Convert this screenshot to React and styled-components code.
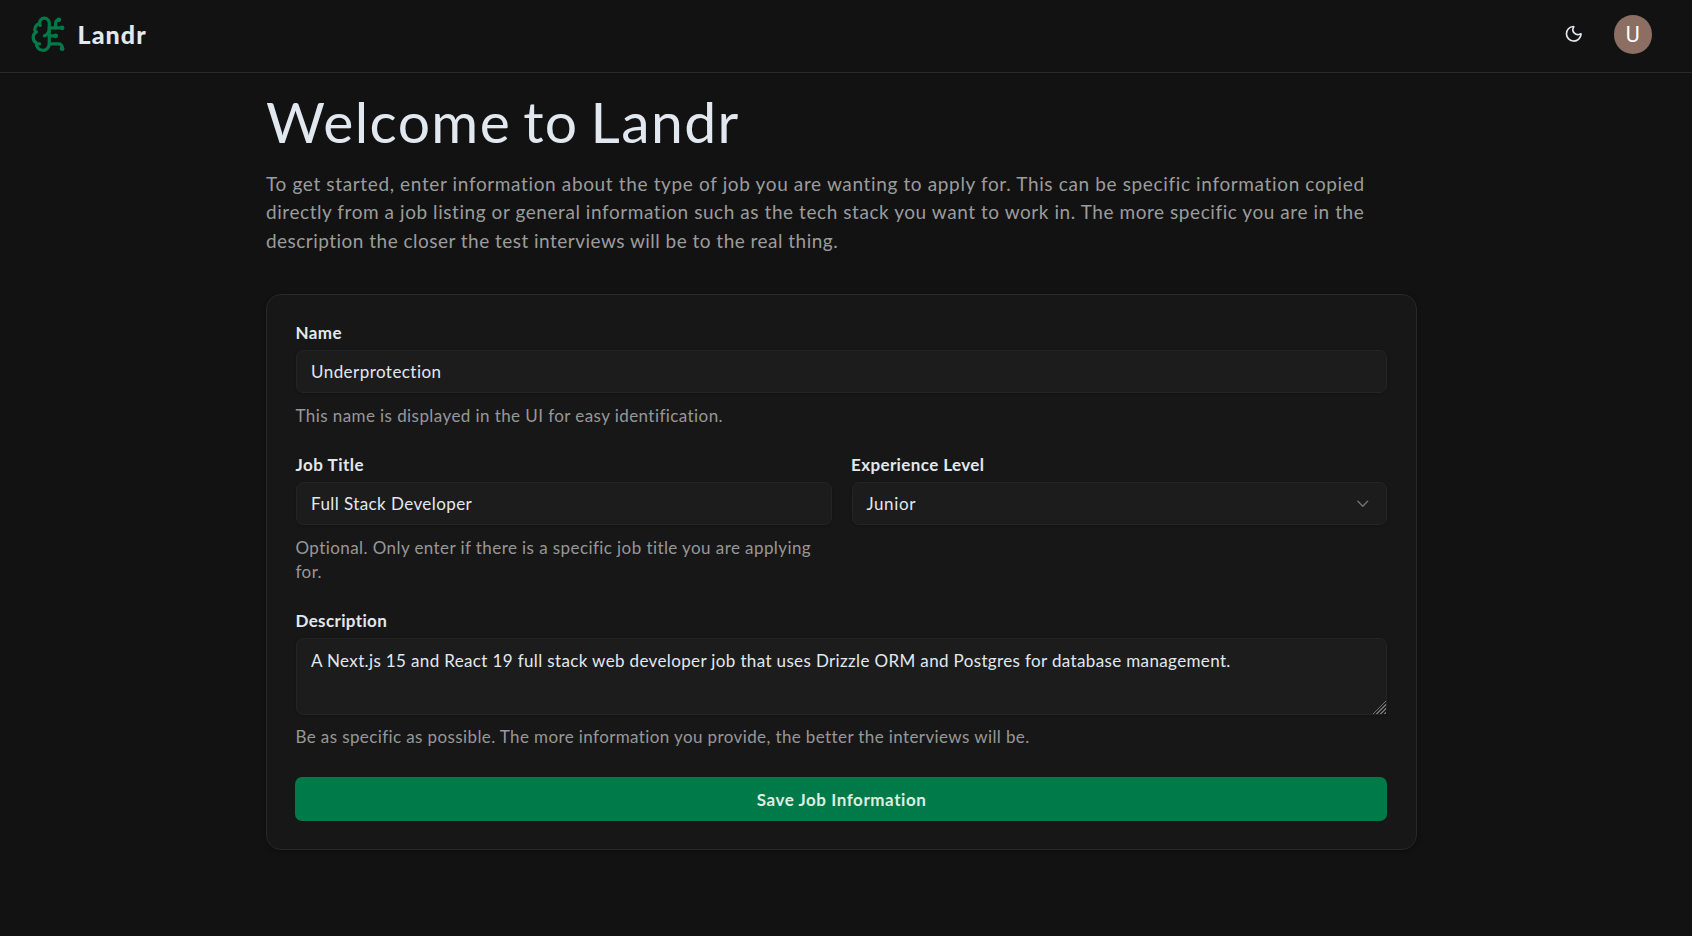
import React from "react";
import styled, { createGlobalStyle } from "styled-components";
import { BrainCircuit, ChevronDown, Moon } from "lucide-react";

const GlobalStyle = createGlobalStyle`
  *, *::before, *::after { box-sizing: border-box; }
  html { color-scheme: dark; background: #121212; }
  body {
    margin: 0;
    min-height: 100vh;
    overflow: hidden;
    background: #121212;
    color: #e2e8f0;
    font-family: Lato, "Open Sans", sans-serif;
    font-size: 17px;
    font-variant-ligatures: none;
  }
`;

const Header = styled.header`
  height: 73px;
  padding: 0 40px 3px 30px;
  display: flex;
  align-items: center;
  justify-content: space-between;
  border-bottom: 1px solid #2a2a2a;
`;

const Brand = styled.div`
  display: flex;
  align-items: center;
  gap: 9px;
  color: #007a48;
`;

const BrandName = styled.span`
  padding-bottom: 2px;
  color: #e2e8f0;
  font-size: 25px;
  font-weight: 900;
  line-height: 30px;
  letter-spacing: 1.1px;
`;

const Actions = styled.div`
  display: flex;
  align-items: center;
  gap: 30px;
`;

const MoonIcon = styled(Moon)`
  margin-bottom: 1.5px;
`;

const Avatar = styled.div`
  width: 38.5px;
  height: 38.5px;
  border-radius: 50%;
  display: grid;
  place-items: center;
  background: #8d6e63;
  color: #fff;
  font: 400 21.5px/38px Roboto, Inter, sans-serif;
`;

const Main = styled.main`
  width: 1151px;
  margin: 0 0 0 266px;
  padding-top: 20px;
`;

const Title = styled.h1`
  margin: 0 0 20.5px;
  font-size: 57px;
  font-weight: 400;
  line-height: 56px;
  letter-spacing: 1.4px;
  word-spacing: -4px;
`;

const Intro = styled.p`
  margin: 0 0 39px;
  color: #9c9c9c;
  font-size: 19px;
  line-height: 28.5px;
`;

const IntroLine = styled.span`
  display: block;
  white-space: nowrap;
  letter-spacing: ${(p) => p.$spacing}px;
`;

const Card = styled.form`
  height: 556px;
  padding: 26px 29px 28px 28px;
  display: flex;
  flex-direction: column;
  gap: 25px;
  background: #171717;
  border: 1px solid #292929;
  border-radius: 15px;
  box-shadow: 0 1px 4px rgba(0, 0, 0, 0.35);
`;

const Columns = styled.div`
  display: grid;
  grid-template-columns: 1fr 1fr;
  gap: 19px;
`;

const Field = styled.div`
  display: flex;
  flex-direction: column;
  min-width: 0;
`;

const Label = styled.label`
  margin-bottom: 5px;
  padding-left: 0.5px;
  font-weight: 700;
  line-height: 24px;
  letter-spacing: ${(p) => p.$spacing ?? 0.4}px;
`;

const controlStyle = `
  margin-left: 1px;
  background: #1c1c1c;
  border: 1px solid #242424;
  border-radius: 7px;
  box-shadow: 0 1px 3px rgba(0, 0, 0, 0.18);
  color: #e2e8f0;
  font: inherit;
  outline: none;
`;

const Input = styled.input`
  ${controlStyle}
  height: 43px;
  padding: 0 14px;
  letter-spacing: ${(p) => p.$spacing ?? 0.45}px;
`;

const Select = styled.button`
  ${controlStyle}
  height: 43px;
  padding: 0 14px;
  display: flex;
  align-items: center;
  justify-content: space-between;
  letter-spacing: 0.6px;

  svg { color: #737373; }
`;

const TextArea = styled.textarea`
  ${controlStyle}
  height: 77px;
  padding: 10px 14px;
  line-height: 24px;
  letter-spacing: 0.36px;
  resize: vertical;

  &::-webkit-resizer {
    background:
      linear-gradient(135deg, #1c1c1c 54%, transparent 54%),
      repeating-linear-gradient(135deg, #707070 0 1px, #1c1c1c 1px 2.8px);
  }
`;

const Help = styled.p`
  margin: ${(p) => p.$top ?? 11}px 0 0;
  padding-left: 0.5px;
  color: #979797;
  line-height: 24px;
  letter-spacing: ${(p) => p.$spacing}px;
`;

const SaveButton = styled.button`
  height: 44px;
  margin-top: 3px;
  padding: 0 0 0 1px;
  border: 0;
  border-radius: 7px;
  background: #007a48;
  color: #dceee2;
  font: inherit;
  font-weight: 700;
  line-height: 45px;
  letter-spacing: 0.55px;
`;

export default function App() {
  return (
    <>
      <GlobalStyle />
      <Header>
        <Brand>
          <BrainCircuit size={38.5} strokeWidth={2} />
          <BrandName>Landr</BrandName>
        </Brand>
        <Actions>
          <MoonIcon size={19.5} strokeWidth={2} />
          <Avatar>U</Avatar>
        </Actions>
      </Header>
      <Main>
        <Title>Welcome to Landr</Title>
        <Intro>
          <IntroLine $spacing={0.637}>
            To get started, enter information about the type of job you are wanting to apply for. This can be specific information copied
          </IntroLine>
          <IntroLine $spacing={0.56}>
            directly from a job listing or general information such as the tech stack you want to work in. The more specific you are in the
          </IntroLine>
          <IntroLine $spacing={0.475}>
            description the closer the test interviews will be to the real thing.
          </IntroLine>
        </Intro>
        <Card>
          <Field>
            <Label>Name</Label>
            <Input defaultValue="Underprotection" />
            <Help $spacing={0.42}>This name is displayed in the UI for easy identification.</Help>
          </Field>
          <Columns>
            <Field>
              <Label $spacing={0.5}>Job Title</Label>
              <Input defaultValue="Full Stack Developer" $spacing={0.42} />
              <Help $spacing={0.42}>
                Optional. Only enter if there is a specific job title you are applying for.
              </Help>
            </Field>
            <Field>
              <Label $spacing={0.38}>Experience Level</Label>
              <Select type="button">
                Junior
                <ChevronDown size={19.5} strokeWidth={1.7} />
              </Select>
            </Field>
          </Columns>
          <Field>
            <Label $spacing={0.35}>Description</Label>
            <TextArea defaultValue="A Next.js 15 and React 19 full stack web developer job that uses Drizzle ORM and Postgres for database management." />
            <Help $top={10} $spacing={0.39}>
              Be as specific as possible. The more information you provide, the better the interviews will be.
            </Help>
          </Field>
          <SaveButton type="button">Save Job Information</SaveButton>
        </Card>
      </Main>
    </>
  );
}
